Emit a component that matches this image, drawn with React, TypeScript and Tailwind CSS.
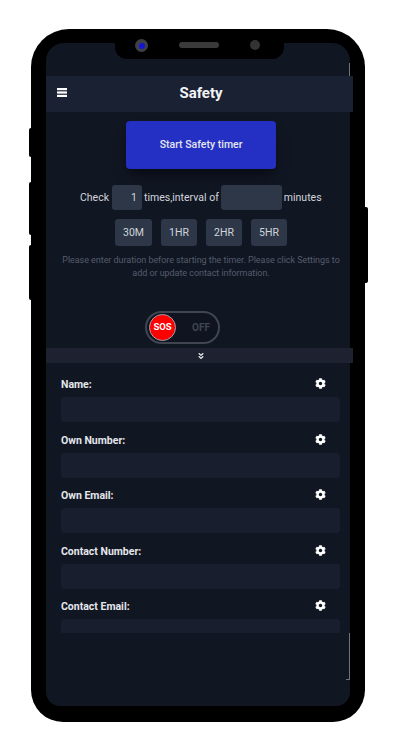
import React from "react";
import { FaAngleDoubleDown, FaCog } from "react-icons/fa";

const fields = ["Name:", "Own Number:", "Own Email:", "Contact Number:", "Contact Email:"];
const durations = [
  { label: "30M", width: "w-[37px]" },
  { label: "1HR", width: "w-[36px]" },
  { label: "2HR", width: "w-[36px]" },
  { label: "5HR", width: "w-[36px]" },
];

const Field = ({ label }: { label: string }) => (
  <div className="h-[55.5px] shrink-0">
    <div className="flex h-[21px] items-start justify-between pr-[14px]">
      <span className="mt-[1px] text-[10.5px] leading-[16px] font-bold text-[#e5e7eb]">{label}</span>
      <FaCog className="mt-[2px] h-[11px] w-[11px] text-white" />
    </div>
    <div className="h-[25px] rounded-[3px] bg-[#181e2d]" />
  </div>
);

export default function App() {
  return (
    <div className="min-h-[750px] bg-white pt-[29px] pl-[31px] font-['Roboto',sans-serif]">
      <div className="relative h-[693px] w-[334px] rounded-t-[38px] rounded-b-[32px] bg-black pt-[14px] pl-[15px]">
        {/* side buttons */}
        <div className="absolute top-[99px] -left-[2px] h-[29px] w-[3px] rounded-l-[2px] bg-black" />
        <div className="absolute top-[153px] -left-[2px] h-[53px] w-[3px] rounded-l-[2px] bg-black" />
        <div className="absolute top-[216px] -left-[2px] h-[55px] w-[3px] rounded-l-[2px] bg-black" />
        <div className="absolute top-[178px] -right-[3px] h-[76px] w-[4px] rounded-r-[2px] bg-black" />

        {/* notch */}
        <div className="absolute top-0 left-[84px] z-10 flex h-[30px] w-[169px] items-start rounded-b-[12px] bg-black">
          <div className="mt-[10px] ml-[20px] flex h-[13px] w-[13px] items-center justify-center rounded-full bg-[#3f3f46]">
            <div className="h-[6px] w-[6px] rounded-full bg-[#1414d8]" />
          </div>
          <div className="mt-[13px] ml-[31px] h-[6px] w-[40px] rounded-full bg-[#3a3a3a]" />
          <div className="mt-[11px] ml-[31px] h-[10px] w-[10px] rounded-full bg-[#333333]" />
        </div>

        {/* bits of the frame image that show through at the screen edge */}
        <div className="absolute top-[34px] left-[318px] h-[13px] w-[1px] bg-[#6b7280]" />
        <div className="absolute top-[604px] left-[318px] z-10 h-[47px] w-[1px] bg-[#6b7280]" />
        <div className="absolute top-[650px] left-[315px] z-10 h-[1px] w-[4px] bg-[#6b7280]" />

        <div className="h-[663px] w-[304px] rounded-t-[18px] rounded-b-[14px] bg-[#111623]">
          <div className="h-[33px]" />
          <header className="relative flex h-[36px] w-[307px] items-center justify-center bg-[#1a2132]">
            <svg className="absolute top-[12px] left-[11px]" width="10" height="9" viewBox="0 0 10 9" fill="white">
              <rect width="10" height="2.2" y="0" />
              <rect width="10" height="2.2" y="3.4" />
              <rect width="10" height="2.2" y="6.8" />
            </svg>
            <h1 className="mb-[2px] ml-[3px] text-[15px] font-bold text-[#f3f4f6]">Safety</h1>
          </header>

          <main className="flex w-[307px] flex-col items-center pt-[9px]">
            <button className="ml-[3px] flex h-[48px] w-[150px] items-center justify-center rounded-[4px] bg-[#2430c4] text-[10.5px] font-medium text-[#e5e7eb] shadow-lg shadow-black/40">
              Start Safety timer
            </button>

            <div className="mt-[16px] flex h-[25px] items-center self-start pl-[34px] text-[10.5px] text-[#d1d5db]">
              <span>Check</span>
              <div className="mr-[2px] ml-[3px] flex h-[25px] w-[30px] items-center justify-end rounded-[3px] bg-[#2d3748] pr-[5px]">1</div>
              <span>times,interval of</span>
              <div className="mx-[2px] h-[25px] w-[61px] rounded-[3px] bg-[#2d3748]" />
              <span>minutes</span>
            </div>

            <div className="mt-[9px] flex gap-[9px] self-start pl-[69px]">
              {durations.map((d) => (
                <div key={d.label} className={`flex h-[27px] items-center justify-center rounded-[3px] bg-[#2d3748] text-[10.5px] text-[#d1d5db] ${d.width}`}>
                  {d.label}
                </div>
              ))}
            </div>

            <p className="mt-[8px] ml-[3px] w-[282px] text-center text-[9px] leading-[13px] tracking-[-0.05px] text-[#545c6b]">
              Please enter duration before starting the timer. Please click Settings to add or update contact information.
            </p>

            <div className="mt-[31px] ml-[99px] flex h-[33px] w-[75px] items-center self-start rounded-full border-2 border-[#3f4650] bg-[#0f1420] pl-[2px]">
              <div className="flex h-[27px] w-[27px] items-center justify-center rounded-full border border-[#9ca3af] bg-[#fe0000] text-[9.5px] font-bold text-white">
                SOS
              </div>
              <span className="ml-[16px] text-[10px] font-bold text-[#3f4650]">OFF</span>
            </div>

            <div className="mt-[4px] flex h-[15px] w-full items-center justify-center bg-[#1e2230] pl-[3px]">
              <FaAngleDoubleDown className="h-[8px] w-[8px] text-[#e5e7eb]" />
            </div>

            <div className="h-[270px] w-full overflow-hidden pt-[13px] pr-[13px] pl-[15px]">
              {fields.map((f) => (
                <Field key={f} label={f} />
              ))}
            </div>
          </main>
        </div>
      </div>
    </div>
  );
}
